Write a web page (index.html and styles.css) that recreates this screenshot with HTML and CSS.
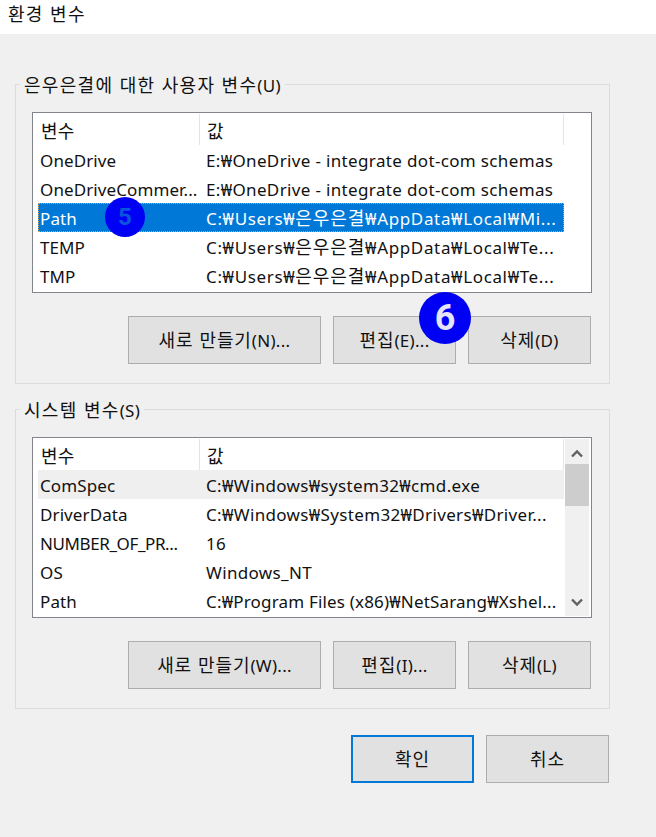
FILE: index.html
```html
<!DOCTYPE html>
<html lang="ko">
<head>
<meta charset="utf-8">
<title>환경 변수</title>
<link rel="stylesheet" href="styles.css">
</head>
<body>
<div class="titlebar">환경 변수</div>
<main class="dialog">
  <section class="group">
    <h2 class="legend"><span class="ko">은우은결에 대한 사용자 변수</span>(U)</h2>
    <div class="list">
      <div class="table">
        <div class="head"><span class="col-name ko">변수</span><span class="col-value ko">값</span></div>
        <div class="row"><span class="col-name">OneDrive</span><span class="col-value">E:₩OneDrive - integrate dot-com schemas</span></div>
        <div class="row"><span class="col-name">OneDriveCommer...</span><span class="col-value">E:₩OneDrive - integrate dot-com schemas</span></div>
        <div class="row selected"><span class="col-name">Path</span><span class="col-value loose">C:₩Users₩<span class="ko">은우은결</span>₩AppData₩Local₩Mi...</span></div>
        <div class="row"><span class="col-name">TEMP</span><span class="col-value loose">C:₩Users₩<span class="ko">은우은결</span>₩AppData₩Local₩Te...</span></div>
        <div class="row"><span class="col-name">TMP</span><span class="col-value loose">C:₩Users₩<span class="ko">은우은결</span>₩AppData₩Local₩Te...</span></div>
      </div>
    </div>
    <div class="actions">
      <button class="btn wide"><span class="ko">새로 만들기</span>(N)...</button>
      <button class="btn"><span class="ko">편집</span>(E)...</button>
      <button class="btn"><span class="ko">삭제</span>(D)</button>
    </div>
  </section>
  <section class="group">
    <h2 class="legend"><span class="ko">시스템 변수</span>(S)</h2>
    <div class="list">
      <div class="table">
        <div class="head"><span class="col-name ko">변수</span><span class="col-value ko">값</span></div>
        <div class="row hover"><span class="col-name">ComSpec</span><span class="col-value">C:₩Windows₩system32₩cmd.exe</span></div>
        <div class="row"><span class="col-name">DriverData</span><span class="col-value">C:₩Windows₩System32₩Drivers₩Driver...</span></div>
        <div class="row"><span class="col-name tight">NUMBER_OF_PR...</span><span class="col-value">16</span></div>
        <div class="row"><span class="col-name">OS</span><span class="col-value">Windows_NT</span></div>
        <div class="row"><span class="col-name">Path</span><span class="col-value snug">C:₩Program Files (x86)₩NetSarang₩Xshel...</span></div>
      </div>
      <div class="scrollbar">
        <svg class="arrow" viewBox="0 0 12 9" width="12" height="9"><path d="M1 7.5 6 2.5l5 5" fill="none" stroke="#606060" stroke-width="2.4"/></svg>
        <div class="track"><div class="thumb"></div></div>
        <svg class="arrow" viewBox="0 0 12 9" width="12" height="9"><path d="M1 1.5 6 6.5l5-5" fill="none" stroke="#606060" stroke-width="2.4"/></svg>
      </div>
    </div>
    <div class="actions">
      <button class="btn wide"><span class="ko">새로 만들기</span>(W)...</button>
      <button class="btn"><span class="ko">편집</span>(I)...</button>
      <button class="btn"><span class="ko">삭제</span>(L)</button>
    </div>
  </section>
  <div class="footer">
    <button class="btn default"><span class="ko">확인</span></button>
    <button class="btn"><span class="ko">취소</span></button>
  </div>
  <span class="badge badge-five">5</span>
  <span class="badge badge-six">6</span>
</main>
</body>
</html>
```

FILE: styles.css
```css
* { box-sizing: border-box; }
html, body { margin: 0; height: 100%; }
body {
  background: #f0f0f0;
  color: #111;
  font-family: "Noto Sans", "Noto Sans CJK KR", sans-serif;
  font-size: 17px;
  letter-spacing: 0.3px;
  overflow: hidden;
}
.ko {
  font-family: "Noto Sans CJK KR", sans-serif;
  font-size: 18px;
  line-height: 1;
  letter-spacing: 0.9px;
}
.titlebar {
  height: 34px;
  background: #fff;
  padding-left: 8px;
  line-height: 26px;
  font-family: "Noto Sans CJK KR", sans-serif;
  font-size: 18px;
  letter-spacing: 1.3px;
}
.dialog {
  position: relative;
  padding: 50px 46px 0 15px;
  display: flex;
  flex-direction: column;
  gap: 25px;
}
.group {
  position: relative;
  height: 300px;
  border: 1px solid #dcdcdc;
  padding: 27px 17px 0 16px;
}
.legend {
  position: absolute;
  left: 4px;
  top: -10px;
  margin: 0;
  padding: 0 4px;
  background: #f0f0f0;
  font-size: 17px;
  font-weight: 400;
  line-height: 22px;
  white-space: nowrap;
}
.legend .ko { letter-spacing: 1.3px; }
.list {
  display: flex;
  height: 181px;
  background: #fff;
  border: 1px solid #82858c;
}
.table { width: 532px; flex: none; }
.head {
  display: flex;
  height: 32px;
  padding: 1px 1px 0 8px;
}
.head .col-name, .head .col-value {
  height: 31px;
  line-height: 33px;
  border-right: 1px solid #e4e4e4;
}
.head .col-name { width: 159px; flex: none; }
.head .col-value { flex: 1; padding-left: 7px; }
.row {
  display: flex;
  height: 29px;
  line-height: 30px;
  margin: 0 1px 0 5px;
  padding-left: 1px;
  white-space: nowrap;
  border: 1px solid transparent;
}
.col-name { width: 166px; flex: none; letter-spacing: 0.1px; }
.col-value { flex: 1; min-width: 0; letter-spacing: 0.35px; }
.tight { letter-spacing: -0.4px; }
.loose { letter-spacing: 0.65px; }
.snug { letter-spacing: 0.18px; }
.selected {
  background: #0078d7;
  color: #fff;
  border: 1px dotted #e8a050;
}
.hover { background: #efefef; }
.scrollbar {
  display: flex;
  flex-direction: column;
  align-items: center;
  justify-content: space-between;
  width: 24px;
  flex: none;
  margin: 1px 2px 1px 0;
  padding: 10px 0 9px;
  background: #f0f0f0;
}
.track { flex: 1; width: 100%; margin-top: 6px; }
.thumb { height: 42px; background: #cdcdcd; }
.actions {
  display: flex;
  gap: 12px;
  justify-content: flex-end;
  margin-top: 23px;
  padding-right: 1px;
}
.btn {
  width: 123px;
  height: 48px;
  background: #e1e1e1;
  border: 1px solid #adadad;
  border-radius: 0;
  color: #111;
  font: inherit;
  letter-spacing: inherit;
  padding: 1px 0 0;
}
.wide { width: 193px; }
.default { border: 2px solid #0078d7; }
.footer {
  display: flex;
  gap: 12px;
  justify-content: flex-end;
  margin-top: 1px;
  padding-right: 1px;
}
.badge {
  position: absolute;
  display: flex;
  align-items: center;
  justify-content: center;
  border-radius: 50%;
  background: #0000f5;
  font-family: "Roboto", sans-serif;
  font-weight: 700;
  letter-spacing: 0;
}
.badge-five {
  left: 105px;
  top: 163px;
  width: 40px;
  height: 40px;
  color: #0a55dd;
  font-size: 24px;
}
.badge-six {
  left: 419px;
  top: 258px;
  width: 52px;
  height: 52px;
  color: #e4e4fa;
  font-size: 36px;
}
```
